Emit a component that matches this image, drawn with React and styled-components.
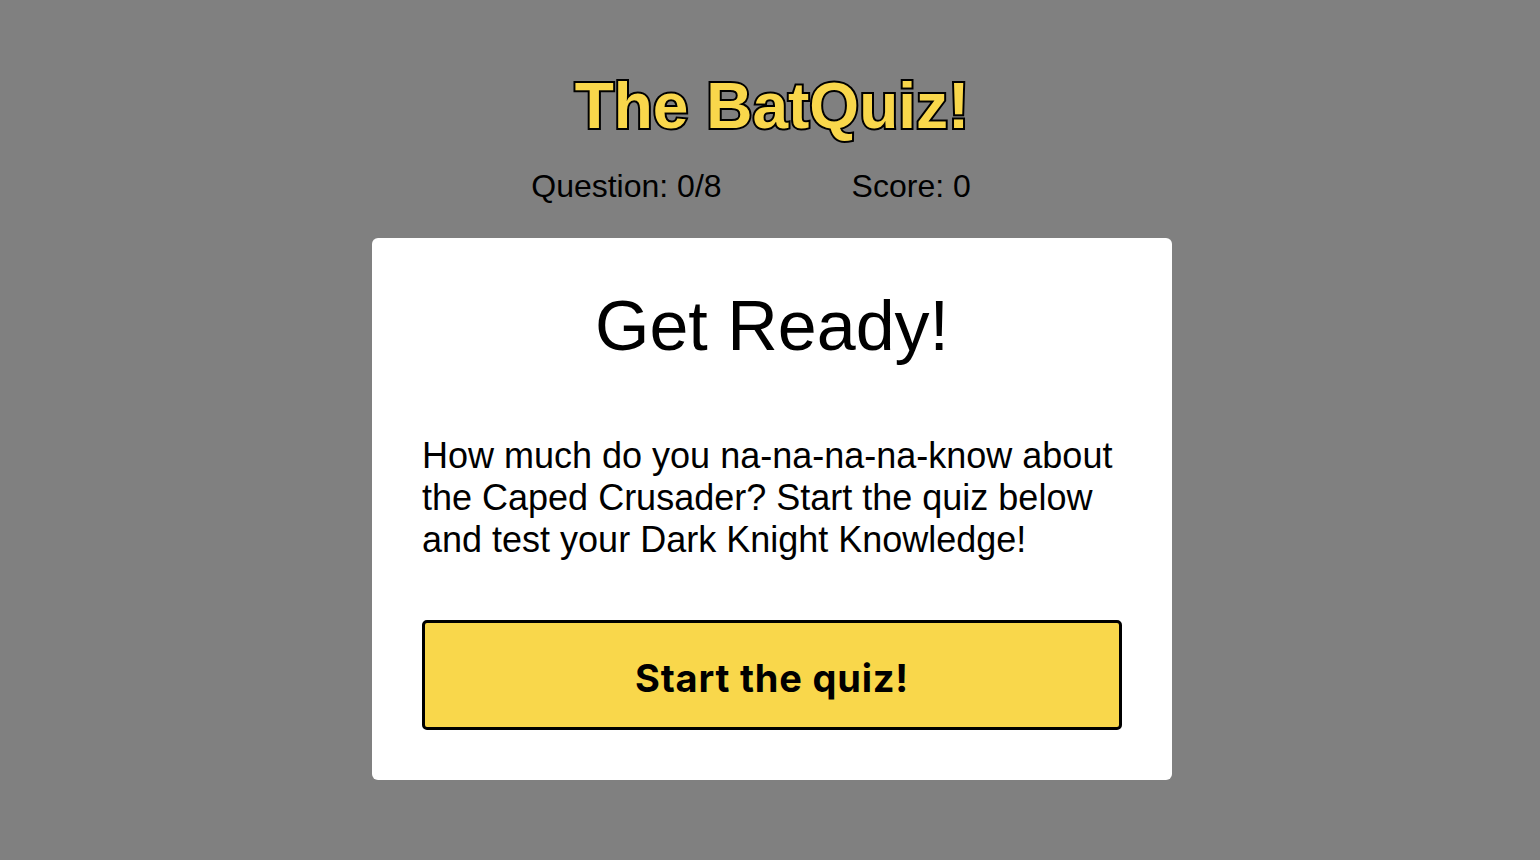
import React from "react";
import styled, { createGlobalStyle } from "styled-components";

const GlobalStyle = createGlobalStyle`
  html, body {
    margin: 0;
    padding: 0;
    background: #808080;
    font-family: "Liberation Sans", Arial, sans-serif;
  }
`;

const Page = styled.div`
  min-height: 860px;
  display: flex;
  flex-direction: column;
  align-items: center;
  padding: 70px 0 0 4px;
  box-sizing: border-box;
`;

const Title = styled.h1`
  margin: 0;
  font-size: 64px;
  font-weight: 700;
  line-height: 72px;
  color: #f9d74b;
  -webkit-text-stroke: 4px #000;
  paint-order: stroke fill;
`;

const Stats = styled.div`
  display: flex;
  gap: 130px;
  margin-top: 26px;
  margin-right: 42px;
  font-size: 32px;
  line-height: 36px;
  color: #000;
`;

const Card = styled.div`
  width: 800px;
  margin-top: 34px;
  background: #fff;
  border-radius: 6px;
  padding: 48px 50px 50px;
  box-sizing: border-box;
`;

const Heading = styled.h2`
  margin: 0;
  text-align: center;
  font-size: 70px;
  font-weight: 400;
  line-height: 80px;
`;

const Intro = styled.p`
  margin: 69px 0 0;
  font-size: 36px;
  line-height: 42px;
  color: #000;
`;

const StartButton = styled.button`
  display: block;
  width: 100%;
  height: 110px;
  margin-top: 59px;
  padding: 6px 0 0;
  background: #f9d74b;
  border: 3px solid #000;
  border-radius: 5px;
  font-family: Inter, Roboto, sans-serif;
  font-size: 38px;
  font-weight: 700;
  letter-spacing: 0.8px;
  color: #000;
  cursor: pointer;
`;

export default function App() {
  return (
    <>
      <GlobalStyle />
      <Page>
        <Title>The BatQuiz!</Title>
        <Stats>
          <span>Question: 0/8</span>
          <span>Score: 0</span>
        </Stats>
        <Card>
          <Heading>Get Ready!</Heading>
          <Intro>
            How much do you na-na-na-na-know about the Caped Crusader? Start
            the quiz below and test your Dark Knight Knowledge!
          </Intro>
          <StartButton>Start the quiz!</StartButton>
        </Card>
      </Page>
    </>
  );
}
